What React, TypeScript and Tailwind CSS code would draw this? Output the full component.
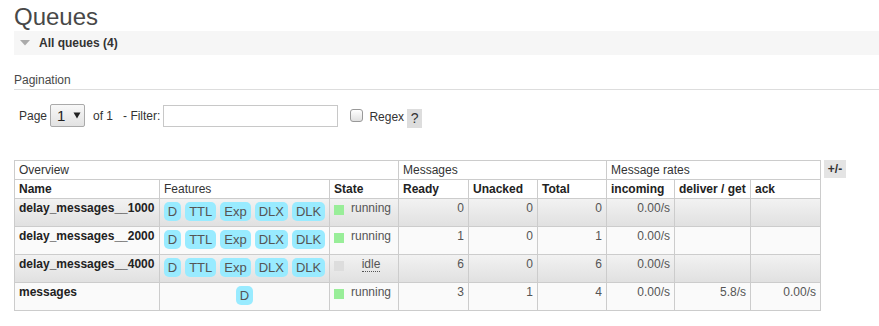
import React from 'react';

type Row = {
  name: string;
  features: string[];
  state: 'running' | 'idle';
  ready: string;
  unacked: string;
  total: string;
  incoming: string;
  deliver: string;
  ack: string;
};

const rows: Row[] = [
  { name: 'delay_messages__1000', features: ['D', 'TTL', 'Exp', 'DLX', 'DLK'], state: 'running', ready: '0', unacked: '0', total: '0', incoming: '0.00/s', deliver: '', ack: '' },
  { name: 'delay_messages__2000', features: ['D', 'TTL', 'Exp', 'DLX', 'DLK'], state: 'running', ready: '1', unacked: '0', total: '1', incoming: '0.00/s', deliver: '', ack: '' },
  { name: 'delay_messages__4000', features: ['D', 'TTL', 'Exp', 'DLX', 'DLK'], state: 'idle', ready: '6', unacked: '0', total: '6', incoming: '0.00/s', deliver: '', ack: '' },
  { name: 'messages', features: ['D'], state: 'running', ready: '3', unacked: '1', total: '4', incoming: '0.00/s', deliver: '5.8/s', ack: '0.00/s' },
];

const th = 'border border-[#ccc] px-[4px] py-[2px] leading-[14px] text-left align-top';
const td = 'border border-[#ccc] px-[4px] pt-[2px] leading-[14px] align-top';
const num = `${td} text-right text-[#555]`;

export default function App() {
  return (
    <div className="w-[879px] h-[326px] overflow-hidden bg-white text-[12px] text-[#484848] font-['Liberation_Sans',Arial,sans-serif]">
      <h1 className="pl-[14px] pt-[3px] text-[24px] leading-[28px] text-[#484848]">Queues</h1>

      <div className="ml-[14px] h-[24px] bg-[#f6f6f6] flex items-center">
        <svg width="10" height="6" viewBox="0 0 10 6" className="ml-[6px]">
          <polygon points="0,0 10,0 5,5.5" fill="#aaa" />
        </svg>
        <span className="ml-[9px] font-bold text-[#333]">All queues (4)</span>
      </div>

      <div className="ml-[14px] mt-[18px] pb-[2px] leading-[14px] border-b border-[#ddd]">Pagination</div>

      <div className="mt-[14px] pl-[19px] flex items-center h-[23px] text-[#333]">
        <span>Page</span>
        <div className="ml-[3px] w-[35px] h-[23px] border border-[#aaa] rounded-[2px] bg-gradient-to-b from-[#f8f8f8] to-[#e2e2e2] flex items-center pl-[6px]">
          <span className="text-[15px] leading-[15px] text-[#222]">1</span>
          <svg width="8" height="7" viewBox="0 0 8 7" className="ml-[8px]">
            <polygon points="0.5,0.5 7.5,0.5 4,6.5" fill="#222" />
          </svg>
        </div>
        <span className="ml-[8px]">of 1</span>
        <span className="ml-[10px]">- Filter:</span>
        <div className="ml-[3px] w-[175px] h-[22px] border border-[#c8c8c8] bg-white" />
        <div className="ml-[12px] w-[13px] h-[13px] rounded-[3px] border border-[#999] bg-gradient-to-b from-white to-[#e0e0e0]" />
        <span className="ml-[6px] mt-[3px]">Regex</span>
        <span className="ml-[3px] self-end mb-[-1px] w-[15px] h-[19px] bg-[#ddd] text-[14px] leading-[19px] text-center text-[#333]">?</span>
      </div>

      <div className="mt-[33px] ml-[14px] flex items-start">
        <table className="border-collapse table-fixed w-[806px] text-[#333]">
          <colgroup>
            <col className="w-[145px]" />
            <col className="w-[170px]" />
            <col className="w-[69px]" />
            <col className="w-[70px]" />
            <col className="w-[69px]" />
            <col className="w-[69px]" />
            <col className="w-[68px]" />
            <col className="w-[76px]" />
            <col className="w-[70px]" />
          </colgroup>
          <thead>
            <tr>
              <th colSpan={3} className={`${th} font-normal`}>Overview</th>
              <th colSpan={3} className={`${th} font-normal`}>Messages</th>
              <th colSpan={3} className={`${th} font-normal`}>Message rates</th>
            </tr>
            <tr className="text-[#222]">
              <th className={`${th} font-bold`}>Name</th>
              <th className={`${th} font-normal text-[#333]`}>Features</th>
              <th className={`${th} font-bold`}>State</th>
              <th className={`${th} font-bold`}>Ready</th>
              <th className={`${th} font-bold`}>Unacked</th>
              <th className={`${th} font-bold`}>Total</th>
              <th className={`${th} font-bold`}>incoming</th>
              <th className={`${th} font-bold`}>deliver / get</th>
              <th className={`${th} font-bold`}>ack</th>
            </tr>
          </thead>
          <tbody>
            {rows.map((r, i) => (
              <tr
                key={r.name}
                className={i % 2 === 0 ? 'bg-gradient-to-b from-[#f2f2f2] to-[#e0e0e0]' : 'bg-[#fafafa]'}
              >
                <td className={`${td} font-bold text-[#222]`}>{r.name}</td>
                <td className="border border-[#ccc] px-[2px] pt-[3px] pb-[5px] align-top">
                  <div className="flex justify-center gap-[4px]">
                    {r.features.map((f) => (
                      <span key={f} className="h-[19px] px-[4px] rounded-[5px] bg-[#99ebff] text-[13px] leading-[19px] text-[#555]">
                        {f}
                      </span>
                    ))}
                  </div>
                </td>
                <td className={`${td} text-[#555]`}>
                  <div className="flex items-start">
                    <span className={`mt-[4px] w-[10px] h-[10px] shrink-0 ${r.state === 'running' ? 'bg-[#99ee99]' : 'bg-[#dddddd]'}`} />
                    <span className="flex-1 text-center pl-[4px]">
                      {r.state === 'idle' ? (
                        <span className="border-b border-dotted border-[#555]">idle</span>
                      ) : (
                        r.state
                      )}
                    </span>
                  </div>
                </td>
                <td className={num}>{r.ready}</td>
                <td className={num}>{r.unacked}</td>
                <td className={num}>{r.total}</td>
                <td className={num}>{r.incoming}</td>
                <td className={num}>{r.deliver}</td>
                <td className={num}>{r.ack}</td>
              </tr>
            ))}
          </tbody>
        </table>
        <span className="ml-[3px] w-[22px] h-[18px] bg-[#e4e4e4] font-bold text-[12px] leading-[18px] text-center text-[#333]">+/-</span>
      </div>
    </div>
  );
}
